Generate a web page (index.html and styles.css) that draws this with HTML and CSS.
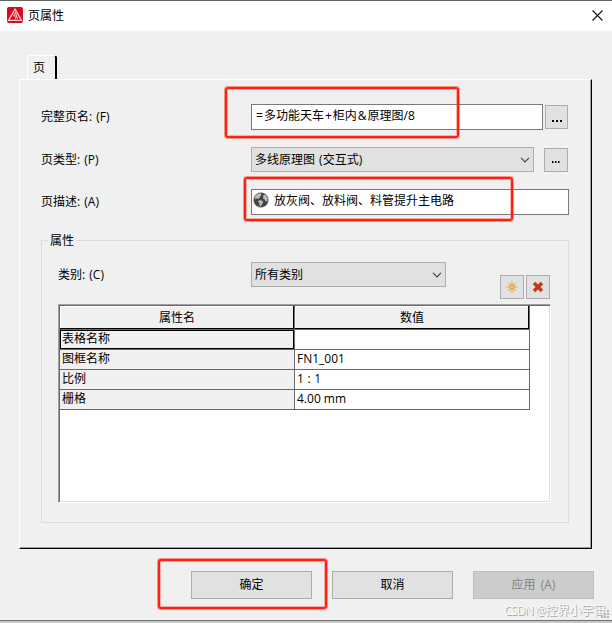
FILE: index.html
```html
<!DOCTYPE html>
<html lang="zh-CN">
<head>
<meta charset="utf-8">
<title>页属性</title>
<link rel="stylesheet" href="styles.css">
</head>
<body>
<div class="dialog">
  <header class="titlebar">
    <svg class="logo" width="16" height="16" viewBox="0 0 16 16"><rect width="16" height="16" rx="2" fill="#e2061c"/><path d="M8 2.200 14.500 13.400H1.500Z" fill="none" stroke="#fbd3d6" stroke-width="1.3"/><path d="M8.500 5 6.500 9h3L8 12.500M8.300 5l2.200 7" fill="none" stroke="#fbd3d6" stroke-width=".9"/></svg>
    <h1 class="title">页属性</h1>
    <svg class="close" width="11" height="11" viewBox="0 0 11 11"><path d="M.5.5l10 10M10.500.5l-10 10" stroke="#111" stroke-width="1.1"/></svg>
  </header>
  <div class="tab">页</div>
  <main class="panel">
    <div class="row row-name">
      <label class="label">完整页名: <span class="lat">(F)</span></label>
      <div class="field name-field"><span class="eq">=</span>多功能天车<span class="plus">+</span>柜内<span class="amp">&amp;</span>原理图/8</div>
      <button class="btn more more-name"><svg width="12" height="3"><path d="M1 0h2v2H1zM5 0h2v2H5zM9 0h2v2H9z"/></svg></button>
    </div>
    <div class="row row-type">
      <label class="label">页类型: <span class="lat">(P)</span></label>
      <div class="combo type-combo"><span>多线原理图 (交互式)</span><svg width="10" height="6" viewBox="0 0 10 6"><path d="M1 .8 5 4.800 9 .8" fill="none" stroke="#444" stroke-width="1.2"/></svg></div>
      <button class="btn more more-type"><svg width="12" height="3"><path d="M2 0h1.500v2H2zM5 0h1.500v2H5zM8 0h1.500v2H8z"/></svg></button>
    </div>
    <div class="row row-desc">
      <label class="label">页描述: <span class="lat">(A)</span></label>
      <div class="field desc-field"><svg class="globe" width="16" height="16" viewBox="0 0 16 16"><circle cx="8" cy="8" r="7.300" fill="#444" stroke="#777" stroke-width=".6"/><path d="M2 4.500 5 1.700 8 1.600 8.200 3.500 6.700 5 6 7 4 6.300 2.500 7.500ZM6 8.300 9 8.500 10.300 10 8.800 12.500 7.600 14.600 6.500 13.500 6.300 11 5 9.600ZM10.500 3 12.500 2.800 14.600 6.500 14.500 9 13 9.700 11.600 7.500 10 6.500Z" fill="#bdbdbd"/></svg><span>放灰阀、放料阀、料管提升主电路</span></div>
    </div>
    <fieldset class="group">
      <legend class="legend">属性</legend>
      <div class="filter">
        <label class="label cat-label">类别: <span class="lat">(C)</span></label>
        <div class="combo cat-combo"><span>所有类别</span><svg width="10" height="6" viewBox="0 0 10 6"><path d="M1 .8 5 4.800 9 .8" fill="none" stroke="#444" stroke-width="1.2"/></svg></div>
        <div class="tools">
          <button class="btn tool"><svg width="12" height="12" viewBox="0 0 12 12"><path d="M6 .5v11M.5 6h11M2.500 2.500l7 7M9.500 2.500l-7 7" stroke="#e8a33a" stroke-width="1.1"/><circle cx="6" cy="6" r="1.700" fill="#f8dfb2" stroke="#e8a33a" stroke-width="1.500"/></svg></button>
          <button class="btn tool"><svg width="12" height="12" viewBox="0 0 12 12"><path d="M2 2l8 8M10 2l-8 8" stroke="#cc3519" stroke-width="3.500"/></svg></button>
        </div>
      </div>
      <div class="list">
        <div class="grid">
          <div class="head">属性名</div><div class="head head-value">数值</div>
          <div class="key focus">表格名称</div><div class="value"></div>
          <div class="key">图框名称</div><div class="value">FN1_001</div>
          <div class="key">比例</div><div class="value ratio">1 : 1</div>
          <div class="key">栅格</div><div class="value">4.00 mm</div>
        </div>
      </div>
    </fieldset>
  </main>
  <footer class="actions">
    <button class="btn action">确定</button>
    <button class="btn action">取消</button>
    <button class="btn action disabled">应用 (A)</button>
  </footer>
  <div class="mark mark-name"></div>
  <div class="mark mark-desc"></div>
  <div class="mark mark-ok"></div>
  <svg class="grip" width="9" height="9" viewBox="0 0 9 9"><path d="M6 0h2v2H6zM3 3h2v2H3zM6 3h2v2H6zM0 6h2v2H0zM3 6h2v2H3zM6 6h2v2H6z" fill="#b5b5b5"/></svg>
  <div class="watermark"><span class="wm-lat">CSDN @</span>控界小宇宙</div>
</div>
</body>
</html>
```
FILE: styles.css
```css
* { box-sizing: border-box; }
body { margin: 0; }
.dialog {
  position: relative;
  width: 612px;
  height: 623px;
  overflow: hidden;
  background: #f0f0f0;
  border-top: 1px solid #666;
  font: 12px/16px "Open Sans", "Noto Sans CJK SC", sans-serif;
  color: #000;
}
.dialog::after {
  content: "";
  position: absolute;
  inset: auto 0 0;
  height: 2px;
  border-top: 1px solid #707070;
  background: #c8c8c8;
}
.titlebar {
  height: 30px;
  display: flex;
  align-items: center;
  padding: 0 9px 0 7px;
  background: #fff;
}
.logo, .close { position: relative; top: -1px; }
.title { flex: 1; margin: 0 0 0 5px; font-size: 12px; font-weight: 400; }
.tab {
  width: 30px;
  height: 24px;
  margin: 24px 0 0 27px;
  padding: 4px 0 0 5px;
  border: solid;
  border-width: 1px 2px 0 1px;
  border-color: #fff #000 #fff #fff;
  border-radius: 3px 3px 0 0;
}
.panel {
  width: 573px;
  height: 470px;
  margin-left: 19px;
  padding: 24px 0 0 21px;
  border: 1px solid;
  border-color: #fff #000 #000 #fff;
  box-shadow: inset -1px -1px #a0a0a0;
}
.row { display: flex; }
.row-name { height: 43px; }
.row-type { height: 42px; }
.row-desc { height: 43px; }
.label { width: 210px; padding-top: 5px; white-space: pre; }
.lat { margin-left: 1px; }
.field {
  height: 26px;
  background: #fff;
  border: 1px solid #7a7a7a;
  padding: 3px 4px;
  white-space: nowrap;
}
.name-field { width: 292px; }
.eq { margin-right: 1px; }
.plus { margin: 0 1px; }
.amp { margin: 0 1px; }
.desc-field { width: 318px; display: flex; padding: 3px 2px; }
.globe { margin: -1px 5px 0 -1px; }
.combo {
  height: 25px;
  display: flex;
  align-items: center;
  justify-content: space-between;
  padding: 0 3px;
  background: #e1e1e1;
  border: 1px solid #adadad;
}
.type-combo { width: 283px; word-spacing: 1px; }
.cat-combo { width: 195px; }
.btn {
  margin: 0;
  padding: 0;
  font: inherit;
  color: inherit;
  background: #e1e1e1;
  border: 1px solid #adadad;
}
.more { height: 24px; display: flex; justify-content: center; padding-top: 14px; margin-top: 1px; }
.more-name { width: 23px; margin-left: 2px; }
.more-type { width: 24px; margin-left: 10px; padding-top: 12px; }
.group {
  width: 528px;
  min-width: 0;
  height: 291px;
  margin: 0;
  padding: 0 0 0 16px;
  border: 1px solid #dcdcdc;
}
.legend { position: relative; top: 1px; padding: 0 2px; margin-left: -10px; }
.filter { display: flex; height: 56px; padding-top: 14px; }
.cat-label { width: 193px; }
.tools { display: flex; gap: 2px; margin: 13px 0 0 54px; }
.tool { width: 24px; height: 24px; display: flex; align-items: center; justify-content: center; }
.list {
  width: 493px;
  height: 199px;
  background: #fff;
  border: 1px solid;
  border-color: #a0a0a0 #fff #fff #a0a0a0;
  box-shadow: inset 1px 1px #696969, inset -1px -1px #e3e3e3;
  padding: 1px;
}
.grid {
  display: grid;
  grid-template-columns: 235px 235px;
  grid-template-rows: 24px repeat(4, 20px);
}
.head {
  background: #f0f0f0;
  text-align: center;
  padding-top: 4px;
  border-right: 1px solid #696969;
  border-bottom: 1px solid #696969;
  box-shadow: inset -1px -1px #000, inset 1px 1px #fff;
}
.key, .value { border: solid #696969; border-width: 0 1px 1px 0; padding: 0 2px; line-height: 18px; white-space: pre; }
.key { background: #f0f0f0; }
.ratio { word-spacing: .5px; }
.focus { box-shadow: inset 0 0 0 1px #000; }
.actions { display: flex; gap: 20px; padding: 22px 0 0 191px; }
.action { width: 121px; height: 28px; }
.disabled { color: #838383; background: #ccc; border-color: #bfbfbf; word-spacing: 2px; }
.mark {
  position: absolute;
  border: 2px solid #ff2010;
  border-radius: 3px;
  box-shadow: 0 0 0 1px rgba(255, 32, 16, .45), inset 0 0 0 1px rgba(255, 32, 16, .3);
}
.mark-name { left: 225px; top: 86px; width: 234px; height: 51px; }
.mark-desc { left: 244px; top: 176px; width: 269px; height: 44px; }
.mark-ok { left: 158px; top: 558px; width: 169px; height: 50px; }
.watermark {
  position: absolute;
  left: 504px;
  top: 602px;
  white-space: nowrap;
  color: #f8f8f8;
  text-shadow: 1px 1px #aaa;
}
.wm-lat { letter-spacing: -.7px; }
.grip { position: absolute; left: 601px; top: 609px; }
```
